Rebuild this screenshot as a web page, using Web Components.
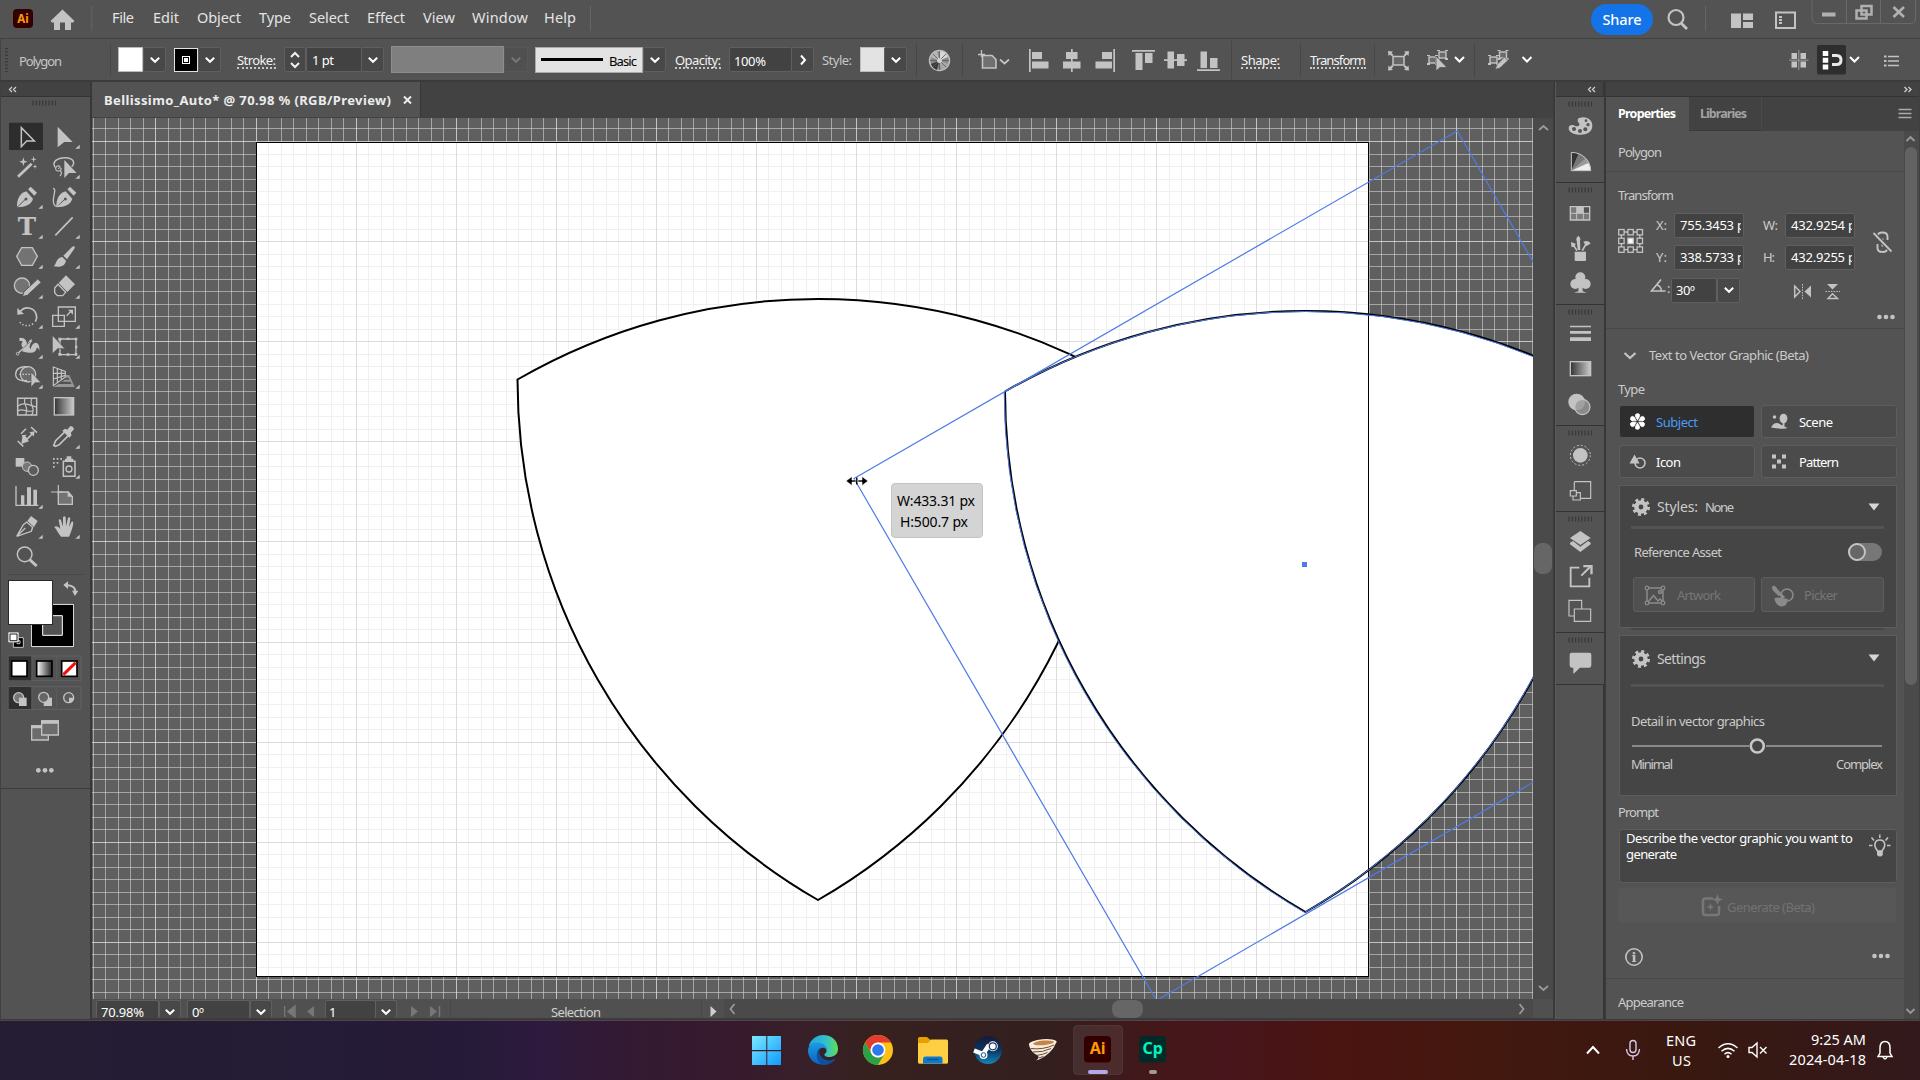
<!DOCTYPE html>
<html lang="en">
<head>
<meta charset="utf-8">
<title>Bellissimo_Auto</title>
<style>
html,body{margin:0;background:#3a3a3a;overflow:hidden}
body{width:1920px;height:1080px}
</style>
</head>
<body>
<app-window></app-window>
<script>
/* ---------- helpers ---------- */
const BASE = `*{box-sizing:border-box}
:host{display:block;font-family:"Noto Sans","Open Sans",sans-serif;font-size:13px;line-height:1;color:#e6e6e6}
svg{display:block;flex:none}
.h{display:flex;align-items:center;height:100%}
.v{display:flex;flex-direction:column}
.h>*,.v>*{flex:none}
.c{display:flex;align-items:center}
.c>*{flex:none}
.field{width:100%;height:25px;background:#424242;border:1px solid #5f5f5f;border-radius:2px;display:flex;align-items:center;color:#fff;overflow:hidden;white-space:nowrap}
.drop{width:100%;height:25px;background:#484848;border:1px solid #5f5f5f;border-radius:2px;display:flex;align-items:center;justify-content:center}
.sep{width:1px;background:#464646}
`;
const define = (name, css, html, init) => customElements.define(name, class extends HTMLElement {
  constructor(){ super(); this.attachShadow({mode:'open'}); }
  connectedCallback(){
    if (this.shadowRoot.childNodes.length) return;
    this.shadowRoot.innerHTML = `<style>${BASE}${css}</style>` + (typeof html === 'function' ? html(this) : html);
    if (init) init(this);
  }
});
/* text whose tracking is adjusted to fill a given width */
customElements.define('fit-text', class extends HTMLElement {
  constructor(){ super(); this.attachShadow({mode:'open'}).innerHTML = '<style>:host{display:inline-block;white-space:pre;line-height:20px;height:20px}span{display:inline-block}</style><span><slot></slot></span>'; }
  connectedCallback(){
    const w = +this.getAttribute('w'), s = this.shadowRoot.querySelector('span'), n = this.textContent.length;
    if (!w || n < 2) return;
    s.style.letterSpacing = ((w - s.getBoundingClientRect().width) / (n - 1)).toFixed(3) + 'px';
    this.style.width = w + 'px';
  }
});
const wrap = (c, w) => c.startsWith('<') ? c : `<fit-text w="${w}">${c}</fit-text>`;
/* horizontal run: items are [start, width, content, extra style] */
const H = (x0, items, st='') => { let p = x0; return `<div class="h" style="${st}">` + items.map(([x,w,c='',s='']) => {
  const m = x - p; p = x + w; return `<div class="c" style="margin-left:${m.toFixed(2)}px;width:${w}px;${s}">${c ? wrap(c,w) : ''}</div>`; }).join('') + '</div>'; };
/* vertical run: items are [top, height, content, extra style] */
const V = (y0, items, st='') => { let p = y0; return `<div class="v" style="${st}">` + items.map(([y,h,c='',s='']) => {
  const m = y - p; p = y + h; return `<div style="margin-top:${m.toFixed(2)}px;height:${h}px;${s}">${c}</div>`; }).join('') + '</div>'; };
const S = (x,y,w,h,b,k=1) => `<svg width="${w/k}" height="${h/k}" viewBox="${x} ${y} ${w} ${h}" fill="#c3c3c3">${b}</svg>`;
const chev = (c='#fff') => `<svg width="12" height="8" viewBox="0 0 12 8"><path d="M1.8 1.8 6 5.8 10.2 1.8" fill="none" stroke="${c}" stroke-width="2"/></svg>`;
const grip = `<svg width="24" height="6"><path d="M.5 3H24" stroke="#383838" stroke-width="5" stroke-dasharray="1.2 2"/></svg>`;
const drop = `<div class="drop">${chev()}</div>`;

/* ---------- title bar ---------- */
const tI = (x,w,b) => [x,w,S(x,0,w,38,b)];
const m = 'margin-top:-5px';
define('title-bar', `:host{height:39px;background:#535353;border-bottom:1px solid #414141;font-size:14.5px;color:#e4e4e4}
.share{width:62px;height:31px;border-radius:16px;background:#1473e6;display:flex;align-items:center;justify-content:center;color:#fff;font-weight:500}`,
H(0, [
 tI(13,21,'<rect x="13" y="9" width="20" height="19" rx="4" fill="#330000"/><text x="23" y="22.5" text-anchor="middle" font-family="Noto Sans" font-weight="700" font-size="11.5" fill="#ff9a00">Ai</text>'),
 tI(50,25,'<path d="M62.5 9.5 74.5 21 73 22.5H71V30H65V22.5H60V30H54V22.5H52L50.5 21Z"/>'),
 tI(91,2,'<path d="M91.8 6V31" stroke="#666"/>'),
 [112,22,'File',m],[153,26,'Edit',m],[197,44,'Object',m],[259,32,'Type',m],[309,40,'Select',m],[367,38,'Effect',m],[423,32,'View',m],[472,56,'Window',m],[544,32,'Help',m],
 tI(590,2,'<path d="M590.5 6V31" stroke="#666"/>'),
 [1591,62,'<div class="share"><fit-text w="39">Share</fit-text></div>'],
 tI(1665,26,'<circle cx="1676" cy="17.5" r="7.5" fill="none" stroke="#c3c3c3" stroke-width="2.2"/><path d="M1681 23 1687 29" stroke="#c3c3c3" stroke-width="2.8"/>'),
 tI(1704,3,'<path d="M1705.5 6V31" stroke="#666"/>'),
 tI(1730,25,'<path d="M1731 13.5H1741V28H1731ZM1743 13.5H1753V20H1743ZM1743 22H1753V28H1743Z"/>'),
 tI(1774,24,'<rect x="1776" y="12.500" width="19" height="15.500" fill="none" stroke="#c3c3c3" stroke-width="2"/><path d="M1780.500 16V25" stroke="#c3c3c3" stroke-width="3" stroke-dasharray="2 1"/>'),
 tI(1811,106,'<path d="M1812 0V18Q1812 23.500 1817.500 23.500H1910Q1915.500 23.500 1915.500 18V0M1846.500 0V23M1880.500 0V23" fill="none" stroke="#696969"/><path d="M1822 12.500H1835.500V16.500H1822Z" fill="#b0b0b0"/><path d="M1861.500 6H1871.500V14.500H1861.500ZM1856.500 10.500H1866.500V18.500H1856.500Z" fill="none" stroke="#b0b0b0" stroke-width="2.500"/><path d="M1893.500 7 1904 17M1904 7 1893.500 17" stroke="#b0b0b0" stroke-width="2.600"/>')
]));

/* ---------- control bar ---------- */
const cI = (x,w,b) => [x,w,S(x,39,w,42,b)];
const sep = (x,a=44,b=76) => cI(x,1,`<rect x="${x}" y="${a}" width="1" height="${b-a}" fill="#474747"/>`);
const ul = 'border-bottom:2px dotted #c8c8c8;height:17px;padding-bottom:0;color:#f2f2f2';
const sm = (x,y) => `<rect x="${x}" y="${y}" width="7" height="6" fill="#6c6c6c" stroke="#c3c3c3" stroke-width="1.4"/><path d="M${x-2} ${y-1}h3v-1h-3zM${x+6} ${y-1}h3v-1h-3zM${x-2} ${y+6}h3v2h-3zM${x+6} ${y+6}h3v2h-3z"/>`;
define('control-bar', `:host{height:43px;background:#535353;border-bottom:2px solid #3b3b3b;border-left:1px solid #444}`,
H(1, [
 cI(4,5,'<path d="M6.500 48V72" stroke="#3a3a3a" stroke-width="3" stroke-dasharray="1.300 2"/>'),
 [19,43,'Polygon','color:#c6c6c6;margin-top:2px'], sep(110),
 [118,25,'<div style="width:25px;height:25px;background:#fff;border:1px solid #bbb"></div>'],[143,23,drop],
 cI(174,24,'<rect x="174.500" y="48.500" width="23" height="23" fill="#000" stroke="#e0e0e0"/><rect x="182.500" y="56.500" width="7" height="7" fill="none" stroke="#fff"/><rect x="184" y="58" width="4" height="4" fill="#fff"/>'),[198,23,drop],
 [237,39,'Stroke:',ul+';margin-top:2px'],
 [284,22,`<div class="drop"><svg width="12" height="20" viewBox="0 0 12 20"><path d="M2 7 6 3 10 7M2 13 6 17 10 13" fill="none" stroke="#f0f0f0" stroke-width="2"/></svg></div>`],
 [306,56,'<div class="field" style="padding-left:5px"><fit-text w="22">1 pt</fit-text></div>'],[361,23,drop],
 [391,113,'<div style="width:113px;height:27px;background:#7f7f7f;border:1px solid #8d8d8d"></div>'],[504,24,`<div class="drop" style="background:#505050;border-color:#575757">${chev('#777')}</div>`],
 [535,108,'<div style="width:108px;height:26px;background:#e3e3e3;border:1px solid #aaa;display:flex;align-items:center;color:#000"><i style="width:62px;height:3px;background:#000;margin:0 6px 0 5px"></i><fit-text w="28" style="margin-top:2px">Basic</fit-text></div>'],[643,23,drop],
 [675,46,'Opacity:',ul+';margin-top:2px'],
 [729,63,'<div class="field" style="padding:2px 0 0 4px"><fit-text w="32">100%</fit-text></div>'],
 [791,23,`<div class="drop"><svg width="8" height="12"><path d="M2 1.500 6 6 2 10.500" fill="none" stroke="#fff" stroke-width="2"/></svg></div>`],
 [822,30,'Style:','color:#c6c6c6'],
 [860,25,'<div style="width:25px;height:25px;background:#e3e3e3;border:1px solid #bbb"></div>'],[884,23,drop],sep(916),
 cI(928,24,`<circle cx="939.500" cy="60.500" r="10" fill="#8a8a8a" stroke="#bdbdbd" stroke-width="1.500"/><path d="M939.500 60.500V51A9.500 9.500 0 0 1 948 57Z" fill="#d6d6d6"/><path d="M939.500 60.500 948.500 64A9.500 9.500 0 0 1 941 70Z" fill="#a8a8a8"/><path d="M939.500 60.500 937 70A9.500 9.500 0 0 1 931 64Z" fill="#3c3c3c"/><path d="M939.500 60.500 930.500 57A9.500 9.500 0 0 1 937 51Z" fill="#b5b5b5"/><path d="M939.500 51V70M930 60.500H949M933 54 946 67M946 54 933 67" stroke="#5a5a5a" stroke-width=".8"/><circle cx="939.500" cy="60.500" r="2.500" fill="#d0d0d0"/>`),
 sep(962),
 cI(977,22,'<path d="M982.500 55.500H992L996 59.500V68H982.500Z" fill="#707070" stroke="#c3c3c3" stroke-width="1.600"/><path d="M981.500 50V57M978 54.500H985" stroke="#c3c3c3" stroke-width="1.300"/>'),
 cI(999,11,'<path d="M1000 59.500 1004.500 63.500 1009 59.500" fill="none" stroke="#c3c3c3" stroke-width="1.700"/>'),
 cI(1028,22,'<path d="M1029 49H1030.700V72H1029ZM1032 52H1042V59H1032ZM1032 61.500H1048.500V68.500H1032Z"/>'),
 cI(1062,20,'<path d="M1071 49H1072.700V72H1071ZM1066 52H1077.500V59H1066ZM1063 61.500H1080.500V68.500H1063Z"/>'),
 cI(1095,21,'<path d="M1113.300 49H1115V72H1113.300ZM1102 52H1112V59H1102ZM1095.500 61.500H1112V68.500H1095.500Z"/>'),
 cI(1131,25,'<path d="M1132 50H1155V51.700H1132ZM1135.500 53H1142.500V70H1135.500ZM1145 53H1152.500V63H1145Z"/>'),
 cI(1164,23,'<path d="M1164 59.200H1187V60.900H1164ZM1167.500 51.500H1174V68.500H1167.500ZM1177 54H1184.500V66H1177Z"/>'),
 cI(1197,24,'<path d="M1197 69.200H1220V70.900H1197ZM1200.500 51.500H1207V68H1200.500ZM1210 58H1217.500V68H1210Z"/>'),
 sep(1231,41,79),[1241,39,'Shape:',ul+';margin-top:2px'],sep(1300),[1310,56,'Transform',ul+';margin-top:2px'],sep(1374),
 cI(1387,23,'<rect x="1393" y="56.500" width="11" height="8.500" fill="#666" stroke="#c3c3c3" stroke-width="1.500"/><path d="M1388 51 1393 51.500 1391.500 53 1393.500 55 1392 56.500 1390 54.500 1388.500 56ZM1409 51 1404 51.500 1405.500 53 1403.500 55 1405 56.500 1407 54.500 1408.500 56ZM1388 70.500 1393 70 1391.500 68.500 1393.500 66.500 1392 65 1390 67 1388.500 65.500ZM1409 70.500 1404 70 1405.500 68.500 1403.500 66.500 1405 65 1407 67 1408.500 65.500Z"/>'),
 cI(1425,24,sm(1429,57)+sm(1439,52)+'<path d="M1436 56V71L1440 67.500H1447Z" stroke="#535353" stroke-width=".8"/>'),
 cI(1454,13,'<path d="M1455 57 1459.500 61.500 1464 57" fill="none" stroke="#fff" stroke-width="2"/>'),sep(1474,43,78),
 cI(1486,24,sm(1490,57)+sm(1499.500,52)+'<path d="M1495 69.500 1497 64.500 1504.500 57 1508 60.500 1500 68Z" stroke="#535353" stroke-width=".8"/>'),
 cI(1521,13,'<path d="M1522.500 57 1527 61.500 1531.500 57" fill="none" stroke="#fff" stroke-width="2"/>'),
 cI(1788,22,'<path d="M1791.500 53H1797V59H1791.500ZM1800.500 53H1806V59H1800.500ZM1791.500 61.500H1797V67.500H1791.500ZM1800.500 61.500H1806V67.500H1800.500Z"/><path d="M1798.800 50V70M1789 60.200H1808.500" stroke="#9a9a9a" stroke-width="1"/>'),
 cI(1817,30,'<rect x="1817" y="45" width="29" height="29.500" rx="2" fill="#2e2e2e"/><path d="M1825.500 51V69.500" stroke="#fff" stroke-width="5.500" stroke-dasharray="5 1.700"/><path d="M1832 55.500H1836.500Q1841 55.500 1841 60T1836.500 64.500H1832" fill="none" stroke="#e8e8e8" stroke-width="3"/>'),
 cI(1848,14,'<path d="M1850 57 1854.500 61.500 1859 57" fill="none" stroke="#fff" stroke-width="2"/>'),
 cI(1883,18,'<path d="M1888 56.500H1899M1888 61H1899M1888 65.500H1899" stroke="#c3c3c3" stroke-width="1.500"/><path d="M1884 56.500H1886.500M1884 61H1886.500M1884 65.500H1886.500" stroke="#c3c3c3" stroke-width="2"/>')
]));

/* ---------- tools panel: icons drawn in thirds of a pixel, cell 108 x 90 ---------- */
const st = (d,w=5,x='') => `<path d="${d}" fill="none" stroke="#c3c3c3" stroke-width="${w}" ${x}/>`;
const nib = '<path d="M51 262C50 240 58 220 79 214L99 236C94 254 78 260 51 262Z"/><path d="M84 208 92 200 111 218 103 227Z"/><path d="M51 262 76 238" stroke="#535353" stroke-width="3"/><circle cx="78" cy="237" r="4.500" fill="#535353"/>';
const tools = [
 ['<rect x="27" y="8" width="102" height="82" rx="3" fill="#2d2d2d"/>'+st('M64 23V80L80 63H103Z',4.5), '<path d="M173 20V82L193 66H218Z"/>','b'],
 [st('M54 170 95 131',8)+'<path d="M70 112 73 122 83 125 73 128 70 138 67 128 57 125 67 122ZM101 108 103 116 110 118 103 120 101 128 99 120 92 118 99 116ZM105 133 106.500 138 112 140 106.500 142 105 147 103.500 142 98 140 103.500 138Z"/>', st('M165 142C155 125 172 113 195 113 222 113 226 130 215 140',4.5)+st('M181 140C175 134 165 140 167 148 170 156 183 154 184 147 183 142 176 142 175 147M181 152Q188 160 180 168',3.5)+'<path d="M193 120V174L207 159H230Z"/>','b'],
 [nib, `<g transform="translate(118 0)">${nib}</g>`+st('M159 205C175 206 148 245 166 258 172 261 178 258 184 252',4),'a'],
 ['<text x="80.500" y="346" text-anchor="middle" font-family="DejaVu Serif" font-weight="700" font-size="74">T</text>', st('M166 346 218 292',5),'ab'],
 ['<path d="M50 409 65 383H97L112 409 97 436H65Z" fill="#737373" stroke="#c3c3c3" stroke-width="4"/>', '<path d="M222 378Q226 380 223 386L201 418 190 407 216 381ZM187 411 198 422C195 440 178 442 161 439 170 432 167 414 187 411Z"/>','ab'],
 ['<circle cx="66" cy="497" r="23" fill="#737373" stroke="#c3c3c3" stroke-width="4"/><path d="M67 530 72 515 113 477 124 487 82 526Z" stroke="#535353" stroke-width="3"/>', '<path d="M198 466 225 493 202 516 176 489Z"/>'+st('M174 493 197 517 188 527H172L164 518V504Z',4),'ab'],
 [st('M60 576C75 555 108 562 110 592 110 597 108 601 106 605',5)+'<path d="M52 564V584L72 582Z"/>'+st('M99 611C87 621 66 619 57 603',5,'stroke-dasharray="4 6"'), st('M175 561H226V604H175ZM158 586H193V619H158Z',4)+st('M200 587 213 574',4)+'<path d="M204 569H219V584Z"/>','ab'],
 ['<path d="M58 654Q80 650 82 678C84 668 86 660 96 657L93 666 88 680 92 688Q96 668 108 668 120 670 118 694 115 680 110 684 108 700 88 698 76 698 66 694L72 684 66 680Q62 672 68 664L58 662Z"/>'+st('M54 700 95 662',4)+'<circle cx="53" cy="701" r="4" fill="#535353" stroke="#c3c3c3" stroke-width="3"/><path d="M70 684 90 666" stroke="#535353" stroke-width="2"/>', st('M180 657H228V704H180Z',4)+'<path d="M175 653h9v9h-9zM224 653h8v8h-8zM224 699h8v8h-8zM175 699h9v8h-9zM200 653h8v7h-8zM200 700h8v7h-8zM225 677h7v8h-7z"/><path d="M157 646V701L173 686H195Z" stroke="#535353" stroke-width="2"/>','ab'],
 ['<circle cx="84" cy="763" r="23" fill="#6b6b6b" stroke="#c3c3c3" stroke-width="4"/>'+st('M83 741C59 737 47 749 47 763 47 778 62 785 81 781',4)+st('M58 763H100',4,'stroke-dasharray="5 4"')+'<path d="M93 756V802L105 788H123Z" stroke="#535353" stroke-width="2"/>', st('M160 741V797L196 771V754ZM172 746V787M184 750V780M160 760H196M160 777 196 766',3.5)+'<path d="M198 765H208L224 801H160L176 792H215L211 785H186L194 779H208L206 773H198Z" opacity=".6"/>','ab'],
 [st('M53 835H110V885H53Z',4.5)+st('M76 835C65 850 90 862 76 885M54 858C70 845 88 855 109 861M97 835C82 848 112 868 94 885M54 873C66 862 85 880 98 872',3.5), '<rect x="163" y="833" width="58" height="52" fill="url(#tg)" stroke="#c3c3c3" stroke-width="4"/>',''],
 [st('M53 963 70 979M93 921 111 938M63 941 78 926',4.5)+'<path d="M65 946 80 944 76 949 81 954 93 942 88 937 104 934 101 950 97 945 83 959 87 964 64 972 67 952Z"/>', st('M166 979 161 976 167 962 198 932 209 943 178 974Z',5)+'<path d="M187 932 195 926 202 929 210 919Q220 917 222 928L212 939 215 946 208 953Z"/>','b'],
 ['<path d="M47 1014H73V1040H47Z"/><circle cx="81" cy="1040" r="14" fill="#777" stroke="#c3c3c3" stroke-width="3"/><circle cx="100" cy="1051" r="15" fill="#5c5c5c" stroke="#c3c3c3" stroke-width="4"/>', st('M190 1024H225V1069H190Z',4.5)+'<path d="M200 1009H214V1023H200ZM195 1016H220V1025H195ZM159 1014h5v5h-5zM170 1014h5v5h-5zM181 1014h5v5h-5zM159 1026h5v5h-5zM170 1026h5v5h-5zM159 1038h5v5h-5z"/><circle cx="207" cy="1047" r="9" fill="none" stroke="#c3c3c3" stroke-width="4"/>','b'],
 [st('M48 1098V1156H115',4)+'<path d="M63 1126H73V1155H63ZM81 1102H93V1155H81ZM100 1109H111V1155H100Z"/>', '<path d="M175 1116H205L217 1130V1153H175Z" fill="#737373" stroke="#c3c3c3" stroke-width="4"/><path d="M203 1114 219 1130H203Z"/>'+st('M175 1095V1126M153 1116H190',3.5),'a'],
 [st('M50 1249 70 1214 80 1206 98 1222 94 1234 50 1249 76 1224',4)+'<path d="M82 1203 93 1188 113 1203 102 1221Z"/>', '<path d="M183 1250C174 1240 170 1228 163 1222 166 1216 175 1219 181 1227L176 1200Q179 1195 183 1200L189 1220 189 1192Q193 1186 197 1192L198 1219 204 1194Q209 1189 211 1196L207 1222 214 1206Q219 1202 220 1208 218 1226 207 1250Z"/>','ab'],
 ['<circle cx="74" cy="1303" r="22" fill="none" stroke="#c3c3c3" stroke-width="4.500"/>'+st('M89 1319 110 1338',9),'','']
];
const grad='<defs><linearGradient id="tg"><stop offset="0" stop-color="#333"/><stop offset="1" stop-color="#ccc"/></linearGradient></defs>';
const tri = (x,y) => `<path d="M${x+101} ${y+68}V${y+80}H${x+88}Z"/>`;
define('tool-button', ':host{width:36px;height:30px}', el => {
  const i=+el.getAttribute('row'), k=+el.getAttribute('col'), x=k?138:27, y=6+90*i, t=tools[i];
  return S(x,y,108,90,grad+t[k]+(t[2].includes(k?'b':'a')?tri(x,y):''),3);
});
define('tool-panel', `:host{width:92px;height:937px;background:#535353;border-left:1px solid #404040;border-right:2px solid #383838}
.head{height:15px;background:#424242;border-bottom:1px solid #333;display:flex;align-items:center;padding-left:7px}
.grid{display:grid;grid-template-columns:36px 36px;column-gap:1px;padding-left:8px}`,
`<div class="head"><svg width="10" height="7"><path d="M4 1 1.500 3.500 4 6M8 1 5.500 3.500 8 6" fill="none" stroke="#d0d0d0" stroke-width="1.300"/></svg></div>`+
V(97,[
 [100,7,`<div style="padding-left:31px">${grip}</div>`],
 [122,450,`<div class="grid">${tools.map((t,i)=>`<tool-button row="${i}" col="0"></tool-button><tool-button row="${i}" col="1"></tool-button>`).join('')}</div>`],
 [574,1,'','background:#474747;margin-left:7px;width:75px'],
 [578,76,S(3,384,255,228,'<path d="M92 461H223V592H92Z" fill="#000"/><path d="M94 463H221V590H94Z" fill="#000" stroke="#fff" stroke-width="3"/><path d="M128 497H187V556H128Z" fill="#535353" stroke="#fff" stroke-width="3"/><rect x="25.500" y="391.500" width="132" height="132" fill="#fff" stroke="#2a2a2a" stroke-width="3"/>'+st('M203 406C220 407 226 414 226 426',6)+'<path d="M190 405 204 394V417ZM216 422H235L225 438Z"/><path d="M40 563H70V592H40Z" fill="#000" stroke="#c3c3c3" stroke-width="3"/><path d="M52 572H60V581H50" fill="none" stroke="#c3c3c3" stroke-width="3"/><path d="M26 548H55V576H26Z" fill="#fff" stroke="#c3c3c3" stroke-width="3"/><path d="M30 552H51V572H30Z" fill="#fff" stroke="#222" stroke-width="3"/>',3)],
 [655,26,S(3,615,255,78,'<path d="M25 618H243V692H25Z" fill="none" stroke="#626262" stroke-width="3"/><path d="M26 619H94V691H26Z" fill="#2f2f2f"/><path d="M96 618V692M170 618V692" stroke="#626262" stroke-width="2"/><rect x="35" y="633" width="46" height="46" fill="#fff" stroke="#000" stroke-width="5"/><rect x="110" y="633" width="46" height="46" fill="url(#wg)" stroke="#000" stroke-width="5"/><rect x="185" y="633" width="46" height="46" fill="#fff" stroke="#000" stroke-width="5"/><path d="M190 674 227 638" stroke="#f01010" stroke-width="9"/><defs><linearGradient id="wg"><stop offset="0" stop-color="#fff"/><stop offset="1" stop-color="#222"/></linearGradient></defs>',3)],
 [686,24,S(3,708,255,72,'<path d="M25 710H243V778H25Z" fill="none" stroke="#626262" stroke-width="3"/><path d="M26 711H94V777H26Z" fill="#2f2f2f"/><path d="M96 710V778M170 710V778" stroke="#626262" stroke-width="2"/><circle cx="56" cy="743" r="15" fill="#777" stroke="#c3c3c3" stroke-width="4"/><path d="M57 743H80V768H57Z"/><path d="M131 743H156V768H131Z"/><circle cx="131" cy="742" r="15" fill="#666" stroke="#c3c3c3" stroke-width="4"/><circle cx="206" cy="743" r="15" fill="#5c5c5c" stroke="#c3c3c3" stroke-width="4"/><path d="M207 743H221Q220 756 207 757Z"/>',3)],
 [718,25,S(3,804,255,75,'<path d="M95 828H145V870H95Z" fill="#6c6c6c" stroke="#c3c3c3" stroke-width="4"/><path d="M125 813H175V855H125Z" fill="#6c6c6c" stroke="#c3c3c3" stroke-width="4"/><path d="M93 826H125V835H93ZM123 811H177V821H123Z"/>',3)],
 [765,11,S(3,945,255,33,'<circle cx="115" cy="961" r="7"/><circle cx="135" cy="961" r="7"/><circle cx="154" cy="961" r="7"/>',3)],
 [788,1,'','background:#3b3b3b']
]));

/* ---------- document canvas ---------- */
const CX=92, CY=118, CW=1441, CH=881;
const gridPath = (major) => { let d='';
  for(let i=-6;i<120;i++){ if((i%8===0)!==major) continue; const x=Math.floor(155.95+i*12.51)+.5; if(x>CX&&x<CX+CW) d+=`M${x} ${CY}v${CH}`; }
  for(let i=-2;i<70;i++){ if((i%8===0)!==major) continue; const y=Math.floor(141.500+i*12.514)+.5; if(y>CY&&y<CY+CH) d+=`M${CX} ${y}h${CW}`; }
  return d; };
const reu = (x,y) => `M${x-300.5} ${y-520.5}A601 601 0 0 1 ${x+300.5} ${y-520.5}A601 601 0 0 1 ${x} ${y}A601 601 0 0 1 ${x-300.5} ${y-520.5}Z`;
define('measure-label', `:host{width:92px;height:55px;background:#d4d4d4;border:1px solid #c4c4c4;border-radius:4px;color:#000;font-size:14px}`,
 V(0,[[7,20,'<fit-text w="78">W:433.31 px</fit-text>','padding-left:5px'],[28,20,'<fit-text w="68">H:500.7 px</fit-text>','padding-left:8px']]));
define('art-canvas', `:host{position:relative;width:${CW}px;height:${CH}px;overflow:hidden}
measure-label{position:absolute;left:${891-CX}px;top:${483-CY}px}`,
 S(CX,CY,CW,CH,`<defs><clipPath id="ab"><path d="M256 142H1369V976H256Z"/></clipPath></defs>
 <rect x="92" y="118" width="1441" height="881" fill="#5f5f5f"/>
 <path d="${gridPath(false)}" stroke="#dedede" stroke-opacity=".55"/><path d="${gridPath(true)}" stroke="#e6e6e6" stroke-opacity=".75"/>
 <g clip-path="url(#ab)"><rect x="256" y="142" width="1113" height="834" fill="#fff"/><path d="${gridPath(false)}" stroke="#f0f0f0"/><path d="${gridPath(true)}" stroke="#dcdcdc"/></g>
 <path d="${reu(818,900)}" fill="#fff" stroke="#000" stroke-width="2"/>
 <path d="${reu(1305.5,912)}" fill="#fff" stroke="#000" stroke-width="2"/>
 <rect x="256.500" y="142.500" width="1112" height="834" fill="none" stroke="#000"/>
 <path d="${reu(1304.7,912.5)}" fill="none" stroke="#4f7be8" stroke-width="1"/>
 <path d="M854 478.500 1457.300 131 1759 651.500 1156.500 1000.500Z" fill="none" stroke="#4f7be8" stroke-width="1.200"/>
 <rect x="1302" y="562" width="5" height="5" fill="#4f7be8"/>
 <path d="M846 481 852 476.500V480H856V482H852V485.500ZM868 481 862 476.500V480H858V482H862V485.500Z" fill="#000" stroke="#fff" stroke-width=".6"/><path d="M856.800 477.500V484.500" stroke="#000" stroke-width="1.400"/>`)
 +'<measure-label></measure-label>');
define('v-scroll', `:host{width:20px;height:881px;background:#4a4a4a}`,
 V(118,[[118,20,S(0,0,20,20,'<path d="M6 12 10.500 8 15 12" fill="none" stroke="#999" stroke-width="1.800"/>')],[543,31,'','width:18px;margin-left:1px;border-radius:8px;background:#666'],[978,20,S(0,0,20,20,'<path d="M6 8 10.500 12 15 8" fill="none" stroke="#999" stroke-width="1.800"/>')]]));
const bI=(x,w,b)=>[x,w,S(x,999,w,19,b)];
const sf=(x,w,pl,t,tw)=>[x,w,`<div class="field" style="height:18px;border-bottom:0;padding:5px 0 0 ${pl}px;margin-top:1px">${wrap(t,tw)}</div>`];
const sd=(x,w)=>[x,w,`<div class="drop" style="height:18px;border-bottom:0;padding-top:4px;margin-top:1px">${chev()}</div>`];
define('status-bar', `:host{height:20px;background:#505050;border-bottom:1px solid #3c3c3c;overflow:hidden;width:1461px}`,
H(92,[
 sf(96,63,4,'70.98%',43),sd(159,22),sf(187,63,4,'0º',12),sd(250,22),
 bI(284,12,'<path d="M284.500 1006V1017M295 1006V1017L288 1011.500Z" stroke="#777" stroke-width="1.500" fill="#777"/>'),
 bI(306,10,'<path d="M314 1006V1017L307 1011.500Z" fill="#777"/>'),
 [325,51,`<div class="field" style="height:18px;border-bottom:0;padding:5px 0 0 3px;margin-top:1px"><fit-text>1</fit-text></div>`],sd(375,22),
 bI(410,10,'<path d="M411 1006V1017L418 1011.500Z" fill="#777"/>'),
 bI(429,12,'<path d="M430 1006V1017L437 1011.500Z" fill="#777"/><path d="M439.500 1006V1017" stroke="#777" stroke-width="1.500"/>'),
 [450,1,'<i style="width:1px;height:18px;background:#474747"></i>'],
 [551,50,'Selection','color:#cfcfcf;padding-top:7px'],
 [701,1,'<i style="width:1px;height:18px;background:#474747"></i>'],
 bI(709,9,'<path d="M710.500 1006V1017L716.500 1011.500Z" fill="#d0d0d0"/>'),
 [724,809,`<div style="width:809px;height:19px;background:#4a4a4a;display:flex;align-items:center;padding-left:5px"><svg width="7" height="12"><path d="M5.500 1 1.500 6 5.500 11" fill="none" stroke="#999" stroke-width="1.800"/></svg><i style="width:31px;height:18px;border-radius:8px;background:#666;margin:0 375px 0 376px"></i><svg width="7" height="12"><path d="M1.500 1 5.500 6 1.500 11" fill="none" stroke="#999" stroke-width="1.800"/></svg></div>`]
]));
define('doc-area', `:host{width:1463px;height:937px;background:#3b3b3b}
.tabs{height:36px;width:1461px;background:#424242}
.tab{width:329px;height:35px;background:#535353;border-right:1px solid #383838;font-weight:700;color:#ececec}
.mid{display:flex}`,
`<div class="tabs"><div class="tab">${H(92,[[104,287,'Bellissimo_Auto* @ 70.98 % (RGB/Preview)'],[403,9,S(0,0,9,10,'<path d="M1 1.500 8 8.500M8 1.500 1 8.500" stroke="#eee" stroke-width="1.900"/>')]])}</div></div>
<div class="mid"><art-canvas></art-canvas><v-scroll></v-scroll></div><status-bar></status-bar>`);

/* ---------- icon dock (thirds of a pixel) ---------- */
const d0 = [
 [97,182,[[86,'<path d="M150 112C170 106 188 118 187 137 186 157 168 164 148 163 128 162 116 154 116 143 116 134 127 132 136 137 148 140 151 132 146 127 141 120 142 114 150 112Z"/><g fill="#535353"><circle cx="132" cy="146" r="6"/><circle cx="150" cy="152" r="6"/><circle cx="166" cy="147" r="6"/><circle cx="174" cy="133" r="5"/><circle cx="168" cy="121" r="4"/></g>'],
  [191,'<path d="M124 216C158 217 182 240 182 271H124Z" fill="#999"/><path d="M124 216Q138 217 146 220L124 271Z" fill="#333"/><path d="M146 220Q158 226 165 235L124 271Z" fill="#777"/><path d="M175 248Q182 258 182 271H124Z" fill="#eee"/>'+st('M124 216C158 217 182 240 182 271H124Z',3)]]],
 [183,304,[[348,st('M121 380H179V420H121Z',4)+'<path d="M160 400H180V420H160ZM121 380H140V400H121ZM140 400H160V420H140ZM121 400H140V420H121Z" opacity=".35"/><path d="M141 380H160V400H141Z"/>'+st('M121 400H179M140 380V420M160 380V420',3)],
  [453,'<path d="M134 515H168V540Q168 543 165 543H137Q134 543 134 540ZM143 510 140 482Q136 475 145 467 154 475 150 482L151 510Z"/>'+st('M141 512 128 492M157 512 168 492',5)+'<path d="M123 486 137 491 134 502 124 500ZM160 485Q174 480 182 490 176 497 168 498Z"/>'],
  [558,'<circle cx="151" cy="592" r="15"/><circle cx="136" cy="612" r="15"/><circle cx="167" cy="612" r="15"/><path d="M147 600H156L158 634 170 638H132L145 634Z"/>']]],
 [305,425,[[709,'<path d="M120 738H183V743H120ZM120 754H183V762H120ZM120 773H183V784H120Z"/>'],
  [814,'<rect x="121" y="846" width="61" height="42" fill="url(#tg)" stroke="#c3c3c3" stroke-width="4"/>'],
  [919,'<circle cx="140" cy="967" r="25"/><circle cx="157" cy="982" r="23" fill="#999" fill-opacity=".8" stroke="#c3c3c3" stroke-width="3.500"/>']]],
 [426,511,[[1074,'<circle cx="151" cy="1126" r="22"/><circle cx="151" cy="1126" r="30" fill="none" stroke="#c3c3c3" stroke-width="3" stroke-dasharray="6 5.800"/>'],
  [1179,st('M133 1205H182V1255H152M133 1205V1230',3.5)+st('M121 1232H139V1248H121ZM139 1238H151V1260H129V1249',3.5)]]],
 [512,632,[[1332,'<path d="M151 1353 182 1374 151 1395 120 1374ZM120 1388 129 1383 151 1400 174 1383 182 1388V1393L151 1416 120 1393Z"/>'],
  [1437,st('M148 1463H122V1519H178V1493',5.5)+st('M154 1487 180 1461',6)+'<path d="M160 1455H188V1483H181V1462H160Z"/>'],
  [1542,st('M117 1561H155V1608H117Z',3.5)+'<path d="M133 1587H182V1624H133Z" fill="#535353" stroke="#c3c3c3" stroke-width="3.500"/>']]],
 [633,684,[[1699,'<path d="M125 1719H179Q184 1719 184 1725V1757Q184 1764 178 1764H150L130 1783V1764H125Q119 1764 119 1757V1725Q119 1719 125 1719Z"/>']]]
];
define('dock-group', ':host{width:48px;border-bottom:1px solid #333;background:#535353}', el=>{
  const g=d0[+el.getAttribute('n')];
  return V(g[0],[[g[0]+4,6,`<div style="padding-left:12px">${grip}</div>`],...g[2].map(([y,b])=>[80+y/3,35,S(78,y,144,105,grad+b,3)])],`height:${g[1]-g[0]}px`);
});
define('icon-dock', `:host{width:50px;height:937px;background:#535353;border-left:1px solid #5a5a5a;border-right:2px solid #363636;box-shadow:-1px 0 #383838}
.head{height:15px;background:#424242;border-bottom:1px solid #333;display:flex;align-items:center;justify-content:flex-end;padding-right:6px}`,
`<div class="head"><svg width="10" height="7"><path d="M4 1 1.500 3.500 4 6M8 1 5.500 3.500 8 6" fill="none" stroke="#d0d0d0" stroke-width="1.300"/></svg></div>`+d0.map((_,i)=>`<dock-group n="${i}"></dock-group>`).join(''));

/* ---------- properties panel ---------- */
const gear = S(1630,496,22,22,'<circle cx="1641" cy="507" r="7.500" fill="none" stroke="#c3c3c3" stroke-width="3" stroke-dasharray="2.945"/><circle cx="1641" cy="507" r="4.600" fill="none" stroke="#c3c3c3" stroke-width="4.400"/>');
const dn = S(0,0,12,8,'<path d="M.5.5H11.500L6 7.500Z" fill="#d6d6d6"/>');
const line = 'background:#484848';
define('type-button', `:host{height:33px;background:#4b4b4b;border:1px solid #5e5e5e;border-radius:3px;color:#fff}:host([on]){background:#2e2e2e;color:#4b9cf5;border-color:#535353}
div{display:flex;align-items:center;height:100%}`,
 '<div><slot></slot></div>');
const F = t => `<div class="field" style="padding-left:5px"><div style="width:61px;overflow:hidden;white-space:nowrap"><fit-text w="65">${t} p</fit-text></div></div>`;
const petal = [0,60,120,180,240,300].map(a=>`<path d="M17.500 14.200 15.300 10.500Q14.800 7.800 17.500 7.600T19.700 10.500Z" transform="rotate(${a} 17.500 15.500)"/>`).join('');
define('prop-panel', `:host{width:315px;height:937px;background:#535353;border-left:1px solid #3a3a3a;border-right:1px solid #404040;color:#cbcbcb}
.head{height:15px;background:#424242;border-bottom:1px solid #333;display:flex;align-items:center;justify-content:flex-end;padding-right:6px}
.tabs{height:34px;background:#424242}
.tab{height:34px;display:flex;align-items:center;font-weight:700}
.body{display:flex;height:888px}
.main{width:298px}
.sc{width:15px;background:#4a4a4a}
.box{background:#454545;border:1px solid #5d5d5d;height:100%}
.btn{width:100%;height:35px;background:#505050;border:1px solid #5e5e5e;border-radius:3px;display:flex;align-items:center;color:#767676}
`,
`<div class="head"><svg width="10" height="7"><path d="M1.500 1 4 3.500 1.500 6M5.500 1 8 3.500 5.500 6" fill="none" stroke="#d0d0d0" stroke-width="1.300"/></svg></div>
<div class="tabs">${H(1606,[
 [1606,83,'<div class="tab" style="width:83px;background:#535353;color:#fff;padding-left:12px;font-size:12.500px"><fit-text w="58">Properties</fit-text></div>'],
 [1689,73,'<div class="tab" style="width:73px;color:#a2a2a2;padding-left:11px;border-right:1px solid #4a4a4a;border-bottom:1px solid #3a3a3a;font-size:12.500px"><fit-text w="47">Libraries</fit-text></div>'],
 [1898,14,S(0,0,14,12,'<path d="M.5 1.500H13.500M.5 5.500H13.500M.5 9.500H13.500" stroke="#aaa" stroke-width="1.300"/>')]])}</div>
<div class="body"><div class="main">${V(131,[
 [142,20,H(1606,[[1618,44,'Polygon']])],[171,1,'',line],
 [185,20,H(1606,[[1618,56,'Transform']])],
 [211,93,`<div style="display:flex">${S(1606,211,44,93,'<g fill="none" stroke="#c3c3c3" stroke-width="1.300">'+[0,1,2].map(r=>[0,1,2].map(c=>`<rect x="${1618.700+c*9.200}" y="${229.500+r*8.700}" width="5.400" height="5.400" ${r==1&&c==1?'fill="#fff"':''}/>`).join('')).join('')+'<path d="M1624 232H1628M1633 232H1637M1624 249.600H1628M1633 249.600H1637M1621.400 235V238M1621.400 244V247M1639.800 235V238M1639.800 244V247"/></g>')}
 <div style="width:218px">${V(211,[
  [212,26,H(1650,[[1656,11,'X:'],[1674,70,F('755.3453')],[1763,15,'W:'],[1785,70,F('432.9254')]])],
  [244,26,H(1650,[[1656,11,'Y:'],[1674,70,F('338.5733')],[1763,12,'H:'],[1785,70,F('432.9255')]])],
  [277,26,H(1650,[[1650,15,S(1649,277,16,26,'<path d="M1660 279.500 1650.500 291H1664.500" fill="none" stroke="#c3c3c3" stroke-width="1.700"/><path d="M1656 285Q1660 286 1660.500 291" fill="none" stroke="#c3c3c3" stroke-width="1.500"/>')],[1667,4,'<fit-text>:</fit-text>','margin-top:-4px'],[1671,46,'<div class="field" style="padding-left:4px"><fit-text w="19">30º</fit-text></div>'],[1717,23,drop],
   [1793,20,S(1793,279,20,26,'<path d="M1794.700 286V297L1800 291.500Z" fill="none" stroke="#c3c3c3" stroke-width="1.500"/><path d="M1811 285.500V297.500L1804.500 291.500Z"/><path d="M1802.500 284V299" stroke="#c3c3c3" stroke-width="1" stroke-dasharray="1.500 1.200"/>'),'padding-top:3px'],
   [1825,16,S(1825,279,16,26,'<path d="M1827 284H1838L1832.500 289.500Z"/><path d="M1828 298.500H1837.500L1832.500 293.800Z" fill="none" stroke="#c3c3c3" stroke-width="1.400"/><path d="M1825.500 291.500H1840" stroke="#c3c3c3" stroke-dasharray="1.500 1.200"/>'),'padding-top:3px']])]
 ])}</div>${S(1868,211,36,93,'<path d="M1877.500 239V236.500Q1877.500 232.500 1882.500 232.500T1887.500 236.500V240M1877.500 244V248Q1877.500 252 1882.500 252T1887.500 248V245.500M1882.500 238.500V240M1882.500 244V246.500" fill="none" stroke="#c3c3c3" stroke-width="1.900"/><path d="M1873.500 233 1891.500 251.500" stroke="#535353" stroke-width="4"/><path d="M1873.500 233 1891.500 251.500" stroke="#c3c3c3" stroke-width="1.800"/>')}</div>`],
 [313,8,H(1606,[[1876,20,S(0,0,20,8,'<circle cx="3.500" cy="4" r="2.300"/><circle cx="10" cy="4" r="2.300"/><circle cx="16.500" cy="4" r="2.300"/>')]])],
 [328,1,'',line],
 [345,20,H(1606,[[1623,14,S(0,0,14,9,'<path d="M1.500 2 7 7 12.500 2" fill="none" stroke="#c3c3c3" stroke-width="2.300"/>')],[1649,160,'Text to Vector Graphic (Beta)']])],
 [379,20,H(1606,[[1618,27,'Type']])],
 [405,33,H(1606,[[1619,136,`<type-button on style="width:136px">${S(0,0,36,31,`<g fill="#fff" stroke="#fff" stroke-width=".5">${petal}</g>`)}<fit-text w="42">Subject</fit-text></type-button>`],
  [1761,136,`<type-button style="width:136px">${S(0,0,37,31,'<circle cx="12.500" cy="11" r="1.800"/><ellipse cx="21.500" cy="12.500" rx="3.900" ry="4.800"/><path d="M20.700 16H22.500V21H20.700ZM9 21.500Q13 14.500 18.500 18.500L25.500 22Q22 23.500 9 21.500Z"/>')}<fit-text w="34">Scene</fit-text></type-button>`]])],
 [445,33,H(1606,[[1619,136,`<type-button style="width:136px">${S(0,0,36,31,'<path d="M14.500 8.500 19.500 17.500H9.500Z"/><circle cx="20" cy="17" r="5" fill="none" stroke="#c3c3c3" stroke-width="1.600"/>')}<fit-text w="25">Icon</fit-text></type-button>`],
  [1761,136,`<type-button style="width:136px">${S(0,0,37,31,'<path d="M10 8.500h4v4h-4zM20 8.500h4v4h-4zM15 13.500h4v4h-4zM10 18.500h4v4h-4zM20 18.500h4v4h-4z"/>')}<fit-text w="40">Pattern</fit-text></type-button>`]])],
 [485,143,`<div class="box">${V(486,[
   [496,22,H(1620,[[1630,22,gear],[1657,41,'Styles:','font-size:14px'],[1705,29,'None'],[1868,12,dn]])],
   [526,3,'','background:#535353;margin-left:11px;width:253px'],
   [541,21,H(1620,[[1634,88,'Reference Asset'],[1848,34,'<div style="width:34px;height:18px;border-radius:9px;background:#777;display:flex"><i style="width:18px;height:18px;border-radius:9px;background:#666;border:2px solid #c3c3c3"></i></div>']])],
   [577,35,H(1620,[[1633,122,`<div class="btn">${S(0,0,43,33,'<g fill="none" stroke="#8a8a8a" stroke-width="1.500"><path d="M13 10H29V25H13Z"/><path d="M14 24 19.500 17.500 24 23 26 21 29 24"/><circle cx="26" cy="14" r="1.500"/></g><g fill="#505050" stroke="#8a8a8a" stroke-width="1.300"><circle cx="13" cy="10" r="1.800"/><circle cx="29" cy="10" r="1.800"/><circle cx="13" cy="25" r="1.800"/><circle cx="29" cy="25" r="1.800"/></g>')}<fit-text w="44">Artwork</fit-text></div>`],
    [1761,123,`<div class="btn">${S(0,0,42,33,'<circle cx="25" cy="17" r="6" fill="none" stroke="#8a8a8a" stroke-width="1.600"/><path d="M12.500 20Q16 19 19 20L26 21Q25 29 19 28.500 13 27 12.500 20Z" fill="#8a8a8a"/><path d="M10 8.500Q12 7 14 9L19 15.500 16.500 18 10.500 12Z" fill="#8a8a8a"/><path d="M16 14 22 20" stroke="#8a8a8a" stroke-width="3"/>')}<fit-text w="34">Picker</fit-text></div>`]])]
  ])}</div>`,'margin-left:13px;width:278px'],
 [628,2,'','background:#474747;margin-left:25px;width:253px'],
 [635,161,`<div class="box">${V(636,[
   [648,22,H(1620,[[1630,22,gear],[1657,49,'Settings','font-size:14px'],[1868,12,dn,'margin-top:-3px']])],
   [684,3,'','background:#535353;margin-left:11px;width:253px'],
   [711,20,H(1620,[[1631,134,'Detail in vector graphics']])],
   [738,16,H(1620,[[1631,252,S(1631,738,252,16,'<path d="M1632 746H1749M1766 746H1882" stroke="#8a8a8a" stroke-width="2"/><circle cx="1757.300" cy="746" r="6.500" fill="none" stroke="#c8c8c8" stroke-width="2.600"/>')]])],
   [754,20,H(1620,[[1631,42,'Minimal'],[1836,47,'Complex']])]
  ])}</div>`,'margin-left:13px;width:278px'],
 [802,20,H(1606,[[1618,41,'Prompt']])],
 [829,54,`<div class="box" style="border-radius:3px;color:#fff;display:flex;padding:0 0 0 6px"><div style="width:240px;margin-top:-2px">${V(829,[[829,16,'<fit-text w="227">Describe the vector graphic you want to</fit-text>'],[845,18,'<fit-text w="51">generate</fit-text>']])}</div>${S(1866,830,26,30,'<path d="M1877.500 851Q1874.800 847.500 1874.800 845 1875 840 1879.800 840T1884.800 845Q1884.800 847.500 1882 851Z" fill="none" stroke="#c3c3c3" stroke-width="1.600"/><path d="M1877 851H1882.800V855Q1880 858 1877 855Z"/><path d="M1879.800 834.500V838M1871.500 837.500 1874 840.500M1888 837.500 1885.500 840.500M1869 845.500H1872.500M1887 845.500H1890.500" stroke="#c3c3c3" stroke-width="1.500"/>')}</div>`,'margin-left:13px;width:278px'],
 [888,35,H(1618,[[1701,22,S(0,0,22,24,'<path d="M12 4.500H4.500Q2 4.500 2 7V18.500Q2 21 4.500 21H15.500Q18 21 18 18.500V12" fill="none" stroke="#777" stroke-width="2.500"/><path d="M16.500 0 18 4 22 5.500 18 7 16.500 11 15 7 11 5.500 15 4ZM9.500 9 10.500 12 13.500 13 10.500 14 9.500 17 8.500 14 5.500 13 8.500 12Z" fill="#777"/>')],[1727,88,'Generate (Beta)','margin-top:2px']]),'background:#575757;border-radius:3px;margin-left:12px;width:278px;color:#727272'],
 [946,22,H(1606,[[1624,20,S(1624,946,20,22,'<circle cx="1634" cy="957" r="8.200" fill="none" stroke="#c3c3c3" stroke-width="1.600"/><text x="1634" y="962" text-anchor="middle" font-family="DejaVu Serif" font-weight="700" font-size="13">i</text>')],[1871,20,S(0,0,20,8,'<circle cx="3.500" cy="4" r="2.300"/><circle cx="10" cy="4" r="2.300"/><circle cx="16.500" cy="4" r="2.300"/>'),'margin-top:-2px']])],
 [978,1,'',line],
 [992,20,H(1606,[[1618,66,'Appearance']])]
 ])}</div>
<div class="sc">${V(131,[[132,14,S(0,0,15,14,'<path d="M2.500 9 6.500 5 10.500 9" fill="none" stroke="#999" stroke-width="1.800"/>')],[147,538,'','width:12px;margin-left:1px;border-radius:6px;background:#626262'],[1004,14,S(0,0,15,14,'<path d="M2.500 5 6.500 9 10.500 5" fill="none" stroke="#999" stroke-width="1.800"/>')]])}</div></div>`);

/* ---------- taskbar ---------- */
const kI=(x,w,b)=>[x,w,S(x,1020,w,60,b)];
define('task-bar', `:host{height:60px;box-shadow:inset 0 1px #55414a;background:linear-gradient(90deg,#241d33 0,#251b38 460px,#2d1a3e 540px,#331a33 620px,#371a2c 740px,#38202a 800px,#36211f 870px,#331f1e 1050px,#44171a 1160px,#47151b 1230px,#4a1410 1340px,#43180f 1480px,#381810 1700px,#33191c 1920px);color:#fff;font-size:14.500px}`,
H(0,[
 kI(752,30,'<defs><linearGradient id="w" x1="0" y1="0" x2="1" y2="1" gradientUnits="objectBoundingBox"><stop offset="0" stop-color="#7be8ff"/><stop offset="1" stop-color="#0f9bff"/></linearGradient></defs><path d="M752 1036H766.300V1050H752ZM767.300 1036H781V1050H767.300ZM752 1051.300H766.300V1065H752ZM767.300 1051.300H781V1065H767.300Z" fill="url(#w)"/>'),
 kI(807,32,'<defs><linearGradient id="e1"><stop offset="0" stop-color="#1fa5e8"/><stop offset=".6" stop-color="#35c1c9"/><stop offset="1" stop-color="#5fe04f"/></linearGradient><linearGradient id="e2" x1="0" y1="0" x2="0" y2="1"><stop offset="0" stop-color="#1b9de2"/><stop offset="1" stop-color="#0a62c0"/></linearGradient></defs><path d="M808.500 1047C810 1040 816 1035 823 1035 832 1035 838 1041 838 1049 838 1055 833 1057 829 1057 826 1057 824 1056 824.500 1054 829 1052 826 1045 819 1044 813 1043 809 1046 808.500 1047Z" fill="url(#e1)"/><path d="M808 1051C808 1045 813 1042 818 1042.500 824 1043 827 1047 827 1050 823 1045 818 1049 818 1053 818 1059 822 1064 828 1064 816 1067 808 1059 808 1051Z" fill="url(#e2)"/><path d="M820 1048C817 1054 822 1060 829 1060.500 832 1060.500 834 1059 835.500 1058.500 834 1062 829 1065 824 1065 817 1064 814 1052 820 1048Z" fill="#0f4f9f"/>'),
 kI(862,32,'<circle cx="878" cy="1050" r="15" fill="#fbc116"/><path d="M865 1042.500A15 15 0 0 1 891 1042.500H878A7.500 7.500 0 0 0 871.500 1053.500Z" fill="#e33b2e"/><path d="M865 1042.500A15 15 0 0 0 878 1065L884.500 1053.700A7.500 7.500 0 0 1 871.500 1053.700Z" fill="#2aa04a"/><circle cx="878" cy="1050" r="7.500" fill="#fff"/><circle cx="878" cy="1050" r="5.800" fill="#2d78ee"/>'),
 kI(917,32,'<path d="M918 1038.500Q918 1037 919.500 1037H927L930.500 1040H946Q948 1040 948 1042V1062Q948 1063.500 946.500 1063.500H919.500Q918 1063.500 918 1062Z" fill="#e6a100"/><path d="M918 1043H928L931 1039.500H946.500Q948 1039.500 948 1041V1062Q948 1063.500 946.500 1063.500H919.500Q918 1063.500 918 1062Z" fill="#fecf43"/><path d="M923 1063.500V1059Q923 1056.500 925.500 1056.500H940Q942.500 1056.500 942.500 1059V1063.500Z" fill="#0c78cf"/><path d="M927 1059.500H938.500" stroke="#0a4b8c" stroke-width="1.200"/>'),
 kI(973,30,'<defs><linearGradient id="s" x1="0" y1="0" x2="0" y2="1"><stop offset="0" stop-color="#171a38"/><stop offset=".5" stop-color="#0b3460"/><stop offset="1" stop-color="#1387b8"/></linearGradient></defs><circle cx="988" cy="1050" r="14" fill="url(#s)"/><path d="M974 1050.500 983 1054 989 1045" fill="none" stroke="#fff" stroke-width="4.500"/><circle cx="992.800" cy="1046.300" r="5" fill="#fff"/><circle cx="992.800" cy="1046.300" r="3.500" fill="none" stroke="#20365c" stroke-width="1.200"/><circle cx="983.500" cy="1055" r="4" fill="#fff"/><circle cx="983.500" cy="1055" r="2.300" fill="none" stroke="#20507c" stroke-width="1"/>'),
 kI(1028,30,'<path d="M1029 1043.500C1029 1049 1033 1053 1037 1055 1040 1057 1038 1059 1036 1060.500 1044 1058 1050 1053 1054 1047L1056.500 1041.500Z" fill="#f5ead8"/><ellipse cx="1042.800" cy="1043" rx="13.800" ry="3.700" fill="#f7efe0" transform="rotate(-5 1042.800 1043)"/><ellipse cx="1043.500" cy="1042.900" rx="10.500" ry="2.300" fill="#c88442" transform="rotate(-5 1043.500 1042.900)"/><path d="M1030.500 1048.500Q1043 1050 1054 1045M1033 1052Q1043 1052.500 1051 1048.500M1037 1055.300Q1042 1055 1047.500 1052.500M1039 1057.800Q1041 1057.500 1043.500 1056.300" stroke="#6b4a38" stroke-width="1" fill="none"/>'),
 kI(1073,51,'<rect x="1073.500" y="1025.500" width="49" height="49" rx="4" fill="#fff" fill-opacity=".08" stroke="#fff" stroke-opacity=".08"/><rect x="1084" y="1036" width="27" height="26.500" rx="4" fill="#330000"/><text x="1097.700" y="1054" text-anchor="middle" font-family="Noto Sans" font-weight="700" font-size="16" fill="#ff9a00">Ai</text><rect x="1088" y="1070" width="20" height="4" rx="2" fill="#b3a9ea"/>'),
 kI(1138,29,'<rect x="1139" y="1036" width="27" height="26.500" rx="4" fill="#002b29"/><text x="1152.700" y="1054" text-anchor="middle" font-family="Noto Sans" font-weight="700" font-size="16" fill="#00f5c0">Cp</text><rect x="1149" y="1070" width="8" height="4" rx="2" fill="#a39a96"/>'),
 kI(1584,18,'<path d="M1587 1053.500 1593 1047 1599 1053.500" fill="none" stroke="#fff" stroke-width="2"/>'),
 kI(1624,18,'<rect x="1630" y="1040.500" width="6" height="12" rx="3" fill="none" stroke="#d8c8e8" stroke-width="1.400"/><path d="M1626.500 1049Q1627 1056 1633 1056T1639.500 1049M1633 1056V1060" fill="none" stroke="#d8c8e8" stroke-width="1.400"/>'),
 [1666,30,V(0,[[0,20,'<fit-text w="30">ENG</fit-text>'],[20,20,'<fit-text w="19">US</fit-text>','padding-left:6px']]),'margin-top:-1px'],
 kI(1717,22,'<g fill="none" stroke="#fff" stroke-width="1.500"><path d="M1718.500 1048Q1728 1039.500 1737.500 1048"/><path d="M1721.500 1051.300Q1728 1045.500 1734.500 1051.300"/><path d="M1724.500 1054.300Q1728 1051 1731.500 1054.300"/></g><circle cx="1728" cy="1056.500" r="1.500" fill="#fff"/>'),
 kI(1747,22,'<path d="M1749 1047.500H1752L1757 1043V1057L1752 1052.500H1749Z" fill="none" stroke="#fff" stroke-width="1.400"/><path d="M1760 1047 1766.500 1053.500M1766.500 1047 1760 1053.500" stroke="#fff" stroke-width="1.400"/>'),
 [1789,77,V(0,[[0,20,'<fit-text w="55">9:25 AM</fit-text>','padding-left:22px'],[20,20,'<fit-text w="77">2024-04-18</fit-text>']]),'margin-top:-2px'],
 kI(1875,20,'<path d="M1878 1056.500 1880 1053V1048Q1880 1041.500 1885 1041.500T1890 1048V1053L1892 1056.500Z" fill="none" stroke="#fff" stroke-width="1.500"/><path d="M1883 1057Q1885 1061 1887 1057" fill="none" stroke="#fff" stroke-width="1.500"/>')
]));

define('app-window', `:host{width:1920px;height:1080px;overflow:hidden}.body{display:flex;height:938px;border-bottom:1px solid #3a3a3a;overflow:hidden}.body>*{flex:none}`,
`<title-bar></title-bar><control-bar></control-bar><div class="body"><tool-panel></tool-panel><doc-area></doc-area><icon-dock></icon-dock><prop-panel></prop-panel></div><task-bar></task-bar>`);
</script>
</body>
</html>
